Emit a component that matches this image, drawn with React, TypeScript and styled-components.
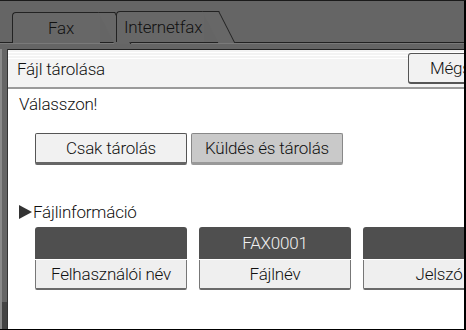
import React from 'react';
import styled, { createGlobalStyle } from 'styled-components';

const font = `Roboto, "DejaVu Sans Condensed", "Liberation Sans", sans-serif`;

const GlobalStyle = createGlobalStyle`
  html, body {
    margin: 0;
    padding: 0;
    background: #ffffff;
  }
  body {
    font-family: ${font};
    font-weight: 300;
    letter-spacing: -0.2px;
    color: #111;
  }
`;

const Screen = styled.div`
  width: 466px;
  height: 330px;
  box-sizing: border-box;
  background: #656565;
  border-top: 1px solid #1a1a1a;
  border-right: 2px solid #000;
  border-bottom: 1px solid #000;
  display: flex;
  flex-direction: column;
  overflow: hidden;
`;

const TabBar = styled.div`
  height: 42px;
  flex: none;
  box-sizing: border-box;
  display: flex;
  align-items: flex-end;
  padding-left: 12px;
  border-bottom: 1px solid #222;
`;

const Tab = styled.div<{ $active?: boolean }>`
  position: relative;
  width: 88px;
  height: 31px;
  margin-right: 16px;
  margin-bottom: ${({ $active }) => ($active ? '-1px' : '0')};
  box-sizing: border-box;
  border-top: 1px solid #222;
  border-left: 1px solid #222;
  border-top-left-radius: 4px;
  background: #676767;
  font-size: 17px;
  line-height: 31px;
  color: #111;
  white-space: nowrap;
  padding-left: ${({ $active }) => ($active ? '35px' : '7px')};
  &::after {
    content: '';
    position: absolute;
    top: -1px;
    right: -15px;
    width: 16px;
    height: calc(100% + 1px);
    background: #676767;
    border-right: 1px solid #222;
    border-top: 1px solid #222;
    transform: skewX(27deg);
    transform-origin: top left;
    z-index: -0;
  }
`;

const TabText = styled.span`
  position: relative;
  z-index: 1;
`;

const Body = styled.div`
  flex: 1;
  min-height: 0;
  display: flex;
  padding-top: 5px;
  border-top: 1px solid #7a7a7a;
`;

const SideStrip = styled.div`
  width: 7px;
  flex: none;
  border-left: 2px solid #8a8a8a;
  box-sizing: border-box;
  background: linear-gradient(#656565 0 253px, #444 253px);
`;

const Panel = styled.div`
  flex: 1;
  min-width: 0;
  overflow: hidden;
  background: #fff;
  border-left: 1px solid #333;
  border-top: 1px solid #222;
  display: flex;
  flex-direction: column;
`;

const TitleBar = styled.div`
  height: 39px;
  flex: none;
  box-sizing: border-box;
  display: flex;
  align-items: center;
  justify-content: space-between;
  padding-left: 9px;
  background: repeating-linear-gradient(
      #f3f3f3 0 2px,
      #ffffff 2px 3px
    )
    top / 100% 9px no-repeat,
    #f3f3f3;
  border-bottom: 2px solid #9a9a9a;
`;

const Title = styled.div`
  font-size: 17px;
`;

const CancelButton = styled.div`
  width: 70px;
  flex: none;
  height: 31px;
  box-sizing: border-box;
  margin-right: -14px;
  border: 1px solid #555;
  border-bottom-width: 2px;
  border-radius: 3px;
  background: #f2f2f2;
  font-size: 17px;
  line-height: 28px;
  padding-left: 21px;
`;

const Content = styled.div`
  padding: 2px 0 0 11px;
  display: flex;
  flex-direction: column;
`;

const Prompt = styled.div`
  font-size: 17px;
  line-height: 26px;
`;

const ButtonRow = styled.div`
  display: flex;
  gap: 4px;
  margin: 16px 0 0 16px;
`;

const ChoiceButton = styled.div<{ $selected?: boolean }>`
  width: 152px;
  height: 32px;
  flex: none;
  box-sizing: border-box;
  border: 1px solid ${({ $selected }) => ($selected ? '#888' : '#555')};
  border-bottom: 3px solid ${({ $selected }) => ($selected ? '#999' : '#666')};
  border-radius: 2px;
  background: ${({ $selected }) => ($selected ? '#c9c9c9' : '#f1f1f1')};
  font-size: 17px;
  line-height: 28px;
  text-align: center;
`;

const SectionLabel = styled.div`
  display: flex;
  align-items: center;
  margin-top: 37px;
  font-size: 17px;
  line-height: 20px;
`;

const Arrow = styled.span`
  width: 0;
  height: 0;
  border-top: 7px solid transparent;
  border-bottom: 7px solid transparent;
  border-left: 13px solid #333;
  margin-right: 1px;
`;

const CardRow = styled.div`
  display: flex;
  gap: 12px;
  margin: 5px 0 0 16px;
`;

const Card = styled.div`
  width: 152px;
  flex: none;
  display: flex;
  flex-direction: column;
`;

const CardValue = styled.div`
  height: 32px;
  background: #4f4f4f;
  border-radius: 3px 3px 0 0;
  color: #f0f0f0;
  font-size: 17px;
  line-height: 32px;
  text-align: center;
  border-bottom: 1px solid #fff;
`;

const CardLabel = styled.div`
  height: 30px;
  box-sizing: border-box;
  background: #efefef;
  border: 1px solid #777;
  border-top: none;
  border-bottom: 2px solid #6a6a6a;
  border-radius: 0 0 2px 2px;
  font-size: 17px;
  line-height: 28px;
  text-align: center;
`;

const fileInfo = [
  { value: '', label: 'Felhasználói név' },
  { value: 'FAX0001', label: 'Fájlnév' },
  { value: '', label: 'Jelszó' },
];

export default function App() {
  return (
    <>
      <GlobalStyle />
      <Screen>
        <TabBar>
          <Tab $active>
            <TabText>Fax</TabText>
          </Tab>
          <Tab>
            <TabText>Internetfax</TabText>
          </Tab>
        </TabBar>
        <Body>
          <SideStrip />
          <Panel>
            <TitleBar>
              <Title>Fájl tárolása</Title>
              <CancelButton>Mégse</CancelButton>
            </TitleBar>
            <Content>
              <Prompt>Válasszon!</Prompt>
              <ButtonRow>
                <ChoiceButton>Csak tárolás</ChoiceButton>
                <ChoiceButton $selected>Küldés és tárolás</ChoiceButton>
              </ButtonRow>
              <SectionLabel>
                <Arrow />
                Fájlinformáció
              </SectionLabel>
              <CardRow>
                {fileInfo.map((f) => (
                  <Card key={f.label}>
                    <CardValue>{f.value}</CardValue>
                    <CardLabel>{f.label}</CardLabel>
                  </Card>
                ))}
              </CardRow>
            </Content>
          </Panel>
        </Body>
      </Screen>
    </>
  );
}
